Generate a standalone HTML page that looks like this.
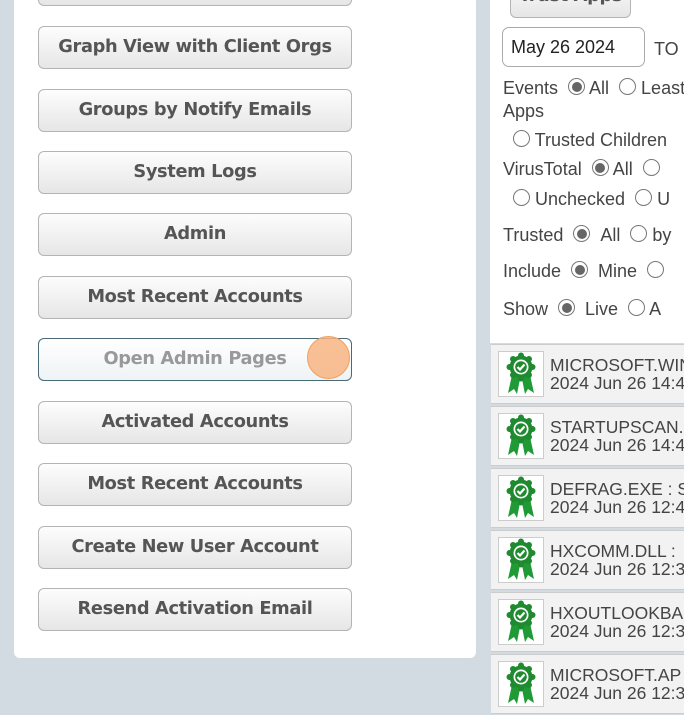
<!DOCTYPE html>
<html><head><style>
*{box-sizing:border-box;margin:0;padding:0}
body{width:684px;height:715px;background:#d3dbe2;position:relative;overflow:hidden;font-family:"Liberation Sans",sans-serif}
.lp{position:absolute;left:14px;top:-10px;width:462px;height:668px;background:#fff;border-radius:6px}
.btn{position:absolute;left:38px;width:314px;height:43px;border:1px solid #b4b4b4;border-radius:6px;background:linear-gradient(#fdfdfd,#e6e6e6);font-family:"DejaVu Sans","Liberation Sans",sans-serif;font-weight:bold;font-size:17.8px;color:#555;text-align:center;line-height:40px;letter-spacing:-0.35px}
.rp{position:absolute;left:490px;top:-10px;width:200px;height:353px;background:#fff}
.t{position:absolute;font-size:18px;color:#444;white-space:nowrap}
.r{display:inline-block;width:17px;height:17px;border:1px solid #777;border-radius:50%;vertical-align:-1px;background:#fff;position:relative}
.r.on::after{content:"";position:absolute;left:2.5px;top:2.5px;width:10px;height:10px;border-radius:50%;background:#666}
.row{position:absolute;left:491px;width:200px;height:60px;background:#f2f2f2;border-top:1px solid #ccc;border-bottom:1px solid #ccc}
.ic{position:absolute;left:7px;top:6px;width:46px;height:46px;border:1px solid #ccc;background:#fff}
.row .a{position:absolute;left:59px;top:11px;font-size:17.5px;line-height:18px;color:#444;white-space:nowrap}
</style></head><body>
<div class="lp"></div>
<div class="btn" style="top:-37px"></div>
<div class="btn" style="top:26px">Graph View with Client Orgs</div>
<div class="btn" style="top:89px">Groups by Notify Emails</div>
<div class="btn" style="top:151px">System Logs</div>
<div class="btn" style="top:213px">Admin</div>
<div class="btn" style="top:276px">Most Recent Accounts</div>
<div class="btn" style="top:338px;border-color:#4a6a78;background:linear-gradient(#fff,#eef3f5);color:#999">Open Admin Pages</div>
<div style="position:absolute;left:307px;top:336px;width:43px;height:43px;border-radius:50%;background:rgba(248,180,130,0.85);border:1px solid #f0a060"></div>
<div class="btn" style="top:401px">Activated Accounts</div>
<div class="btn" style="top:463px">Most Recent Accounts</div>
<div class="btn" style="top:526px">Create New User Account</div>
<div class="btn" style="top:588px">Resend Activation Email</div>

<div class="rp"></div>
<div class="btn" style="left:510px;top:-25px;width:121px;line-height:40px;overflow:hidden">Trust Apps</div>
<div style="position:absolute;left:502px;top:27px;width:143px;height:40px;border:1px solid #aaa;border-radius:7px;background:#fff;font-size:18px;color:#222;padding:9px 0 0 8px">May 26 2024</div>
<div class="t" style="left:654px;top:39px">TO</div>
<div class="t" style="left:503px;top:78px">Events &nbsp;<span class="r on"></span> All &nbsp;<span class="r"></span> Least</div>
<div class="t" style="left:503px;top:101px">Apps</div>
<div class="t" style="left:513px;top:130px"><span class="r"></span> Trusted Children</div>
<div class="t" style="left:503px;top:159px">VirusTotal &nbsp;<span class="r on"></span> All &nbsp;<span class="r"></span></div>
<div class="t" style="left:513px;top:189px"><span class="r"></span> Unchecked &nbsp;<span class="r"></span> U</div>
<div class="t" style="left:503px;top:225px">Trusted &nbsp;<span class="r on"></span> &nbsp;All &nbsp;<span class="r"></span> by</div>
<div class="t" style="left:503px;top:261px">Include &nbsp;<span class="r on"></span> &nbsp;Mine &nbsp;<span class="r"></span></div>
<div class="t" style="left:503px;top:299px">Show &nbsp;<span class="r on"></span> &nbsp;Live &nbsp;<span class="r"></span> A</div>

<svg width="0" height="0" style="position:absolute"><defs><g id="b">
<path d="M13 23 L9 41 L15 37 L18 42 L21 27Z M31 23 L35 41 L29 37 L26 42 L23 27Z" fill="#1f9a35"/>
<circle cx="22" cy="15" r="11.5" fill="#1f8a30"/>
<g fill="#1f8a30"><circle cx="22" cy="3.5" r="3"/><circle cx="22" cy="26.5" r="3"/><circle cx="10.5" cy="15" r="3"/><circle cx="33.5" cy="15" r="3"/><circle cx="14" cy="7" r="3"/><circle cx="30" cy="7" r="3"/><circle cx="14" cy="23" r="3"/><circle cx="30" cy="23" r="3"/></g>
<circle cx="22" cy="15" r="7.5" fill="#fff"/><circle cx="22" cy="15" r="5.8" fill="#1f8a30"/>
<path d="M18.5 15 L21 17.5 L25.5 12.5" stroke="#fff" stroke-width="2.2" fill="none"/>
</g></defs></svg>

<div class="row" style="top:344px"><div class="ic"><svg width="44" height="44"><use href="#b"/></svg></div><div class="a">MICROSOFT.WIN<br>2024 Jun 26 14:47</div></div>
<div class="row" style="top:406px"><div class="ic"><svg width="44" height="44"><use href="#b"/></svg></div><div class="a">STARTUPSCAN.E<br>2024 Jun 26 14:47</div></div>
<div class="row" style="top:468px"><div class="ic"><svg width="44" height="44"><use href="#b"/></svg></div><div class="a">DEFRAG.EXE : S<br>2024 Jun 26 12:47</div></div>
<div class="row" style="top:530px"><div class="ic"><svg width="44" height="44"><use href="#b"/></svg></div><div class="a">HXCOMM.DLL : <br>2024 Jun 26 12:37</div></div>
<div class="row" style="top:592px"><div class="ic"><svg width="44" height="44"><use href="#b"/></svg></div><div class="a">HXOUTLOOKBA<br>2024 Jun 26 12:37</div></div>
<div class="row" style="top:654px"><div class="ic"><svg width="44" height="44"><use href="#b"/></svg></div><div class="a">MICROSOFT.AP<br>2024 Jun 26 12:37</div></div>
</body></html>
